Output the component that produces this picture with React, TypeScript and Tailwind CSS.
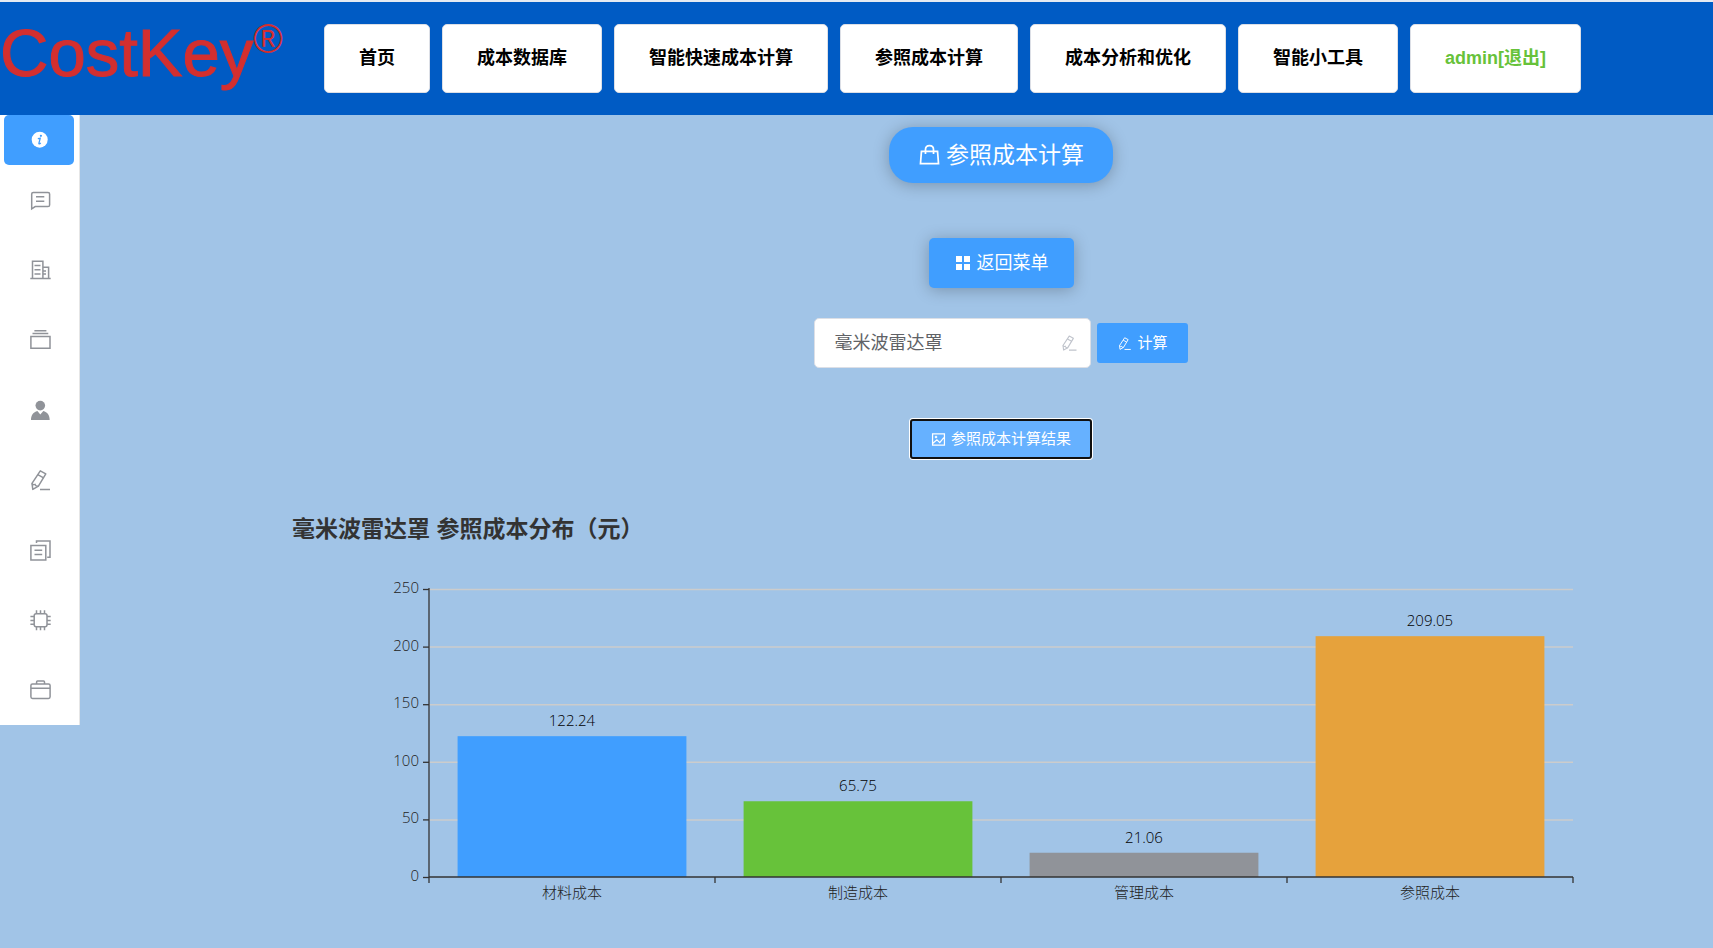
import { useState, type ReactNode } from "react";

const navItems = [
  "首页",
  "成本数据库",
  "智能快速成本计算",
  "参照成本计算",
  "成本分析和优化",
  "智能小工具",
];

const costs = [
  { name: "材料成本", value: 122.24, color: "#409eff" },
  { name: "制造成本", value: 65.75, color: "#67c23a" },
  { name: "管理成本", value: 21.06, color: "#909399" },
  { name: "参照成本", value: 209.05, color: "#e6a23c" },
];

function Icon({ children, className }: { children: ReactNode; className: string }) {
  return (
    <svg
      viewBox="0 0 24 24"
      className={`shrink-0 ${className}`}
      fill="none"
      stroke="currentColor"
      strokeWidth="1.5"
      aria-hidden="true"
    >
      {children}
    </svg>
  );
}

function EditIcon({ className }: { className: string }) {
  return (
    <Icon className={className}>
      <path d="M12.3 2.8 L17.8 5.8 L10.4 18.2 L4.8 21.4 L4 15.4 L12.3 2.8 Z" strokeLinejoin="round" />
      <path d="M9.8 6.6 L15.6 9.8 M4 15.4 Q5 17.2 7 16.4 Q7.6 18.6 10.4 18.2 M12 21.5 H22" />
    </Icon>
  );
}

const sideItems = [
  {
    label: "消息",
    icon: (
      <Icon className="size-6">
        <path d="M3.7 20.8 V6 Q3.7 4.4 5.3 4.4 H20 Q21.6 4.4 21.6 6 V16.9 Q21.6 18.5 20 18.5 H7.2 Z" />
        <path d="M8 8.8 H16.3 M8 13.2 H16.3" />
      </Icon>
    ),
  },
  {
    label: "企业",
    icon: (
      <Icon className="size-6">
        <path d="M2.3 20.6 H22.7 M4.5 20.6 V3.2 H14.9 V20.6 M14.9 9.2 H20.6 V20.6" />
        <path d="M6.5 7.5 H12.5 M6.5 11.7 H12.5 M6.5 15.9 H12.5 M15 13 H18 M15 15.9 H18" />
      </Icon>
    ),
  },
  {
    label: "文件",
    icon: (
      <Icon className="size-6">
        <path d="M2.9 8.6 H22 V20.3 H2.9 Z M4.5 5.6 H20.3 M6.4 2.7 H18.4" />
      </Icon>
    ),
  },
  {
    label: "用户",
    icon: (
      <Icon className="size-6">
        <circle cx="12.3" cy="7.6" r="4.8" fill="currentColor" stroke="none" />
        <path
          d="M3 22 C3 17 5.4 14 9.4 13 L12.3 16.6 L15.3 13 C19.3 14 21.7 17 21.7 22 Z"
          fill="currentColor"
          stroke="none"
        />
      </Icon>
    ),
  },
  { label: "编辑", icon: <EditIcon className="size-6" /> },
  {
    label: "复制",
    icon: (
      <Icon className="size-6">
        <path d="M2.9 7.4 H17.8 V21.9 H2.9 Z M8.5 4.9 V2.9 H22 V19.2 H19.2" />
        <path d="M6.5 12.3 H14.2 M6.5 16.6 H14.2" />
      </Icon>
    ),
  },
  {
    label: "芯片",
    icon: (
      <Icon className="size-6">
        <rect x="6.2" y="5.8" width="12.8" height="13" rx="2" />
        <path d="M8.5 2.3 V5.8 M12.5 2.3 V5.8 M16.5 2.3 V5.8 M8.5 18.8 V22.3 M12.5 18.8 V22.3 M16.5 18.8 V22.3" />
        <path d="M2.4 8.6 H6.2 M2.4 12.4 H6.2 M2.4 16.2 H6.2 M19 8.6 H22.7 M19 12.4 H22.7 M19 16.2 H22.7" />
      </Icon>
    ),
  },
  {
    label: "工具箱",
    icon: (
      <Icon className="size-6">
        <rect x="2.9" y="6" width="19.2" height="14.4" rx="1.6" />
        <path d="M2.9 10.2 H22.1 M8.6 6 V3.9 Q8.6 3 9.5 3 H15.6 Q16.5 3 16.5 3.9 V6" />
      </Icon>
    ),
  },
];

function BarChart() {
  const top = 10;
  const height = 288;
  const bottom = top + height;
  const y = (value: number) => bottom - (value / 250) * height;

  return (
    <svg
      className="block h-[330px] w-full overflow-visible font-['Open_Sans','Noto_Sans_CJK_SC',sans-serif] text-[15px] font-light"
      role="img"
      aria-label="参照成本分布"
    >
      {[50, 100, 150, 200, 250].map((tick) => (
        <line key={tick} x1="0" x2="100%" y1={y(tick) + 0.5} y2={y(tick) + 0.5} stroke="#ccc" strokeWidth="1.5" />
      ))}
      {costs.map((c, i) => (
        <g key={c.name}>
          <rect x={`${i * 25 + 2.5}%`} y={y(c.value)} width="20%" height={bottom - y(c.value)} fill={c.color} />
          <text x={`${i * 25 + 12.5}%`} y={y(c.value) - 10} textAnchor="middle" fill="#000">
            {c.value}
          </text>
          <text x={`${i * 25 + 12.5}%`} y={bottom + 21} textAnchor="middle" fill="#222">
            {c.name}
          </text>
        </g>
      ))}
      <line x1="0" x2="0" y1={top - 1} y2={bottom} stroke="#333" strokeWidth="1.3" />
      <line x1="0" x2="100%" y1={bottom} y2={bottom} stroke="#333" strokeWidth="1.3" />
      {[0, 25, 50, 75, 100].map((p) => (
        <line key={p} x1={`${p}%`} x2={`${p}%`} y1={bottom} y2={bottom + 6} stroke="#333" strokeWidth="1.3" />
      ))}
      {[0, 50, 100, 150, 200, 250].map((tick) => (
        <g key={tick}>
          <line x1="-6" x2="0" y1={y(tick) + 0.5} y2={y(tick) + 0.5} stroke="#333" strokeWidth="1.3" />
          <text x="-10" y={y(tick) + 4} textAnchor="end" fill="#222">
            {tick}
          </text>
        </g>
      ))}
    </svg>
  );
}

export default function App() {
  const [part, setPart] = useState("毫米波雷达罩");

  return (
    <div className="min-h-screen bg-[#a1c4e7] font-['Liberation_Sans','Noto_Sans_CJK_SC',sans-serif]">
      <header className="flex h-[115px] items-start border-t-2 border-[#e4eaf2] bg-[#005bc4]">
        <h1 className="w-[324px] shrink-0 pt-[13px] text-[67px] leading-[76px] text-[#d32f2f] [-webkit-text-stroke:1px_#d32f2f]">
          CostKey<span className="align-super text-[40px] leading-none [-webkit-text-stroke:0px]">®</span>
        </h1>
        <nav className="flex gap-3 pt-[22px] text-[18px] font-bold whitespace-nowrap">
          {navItems.map((item) => (
            <button key={item} type="button" className="h-[69px] rounded-[5px] border border-[#dcdfe6] bg-white px-[34px] text-black">
              {item}
            </button>
          ))}
          <button type="button" className="h-[69px] rounded-[5px] border border-[#dcdfe6] bg-white px-[34px] text-[#67c23a]">
            admin[退出]
          </button>
        </nav>
      </header>

      <div className="flex items-start">
        <aside className="w-[289px] shrink-0">
          <nav className="flex w-20 flex-col border-r border-[#e6e6e6] bg-white text-[#909399]">
            <button type="button" aria-label="信息" className="ml-1 flex h-[50px] w-[70px] items-center justify-center rounded-[5px] bg-[#409eff]">
              <svg viewBox="0 0 18 18" className="size-[18px]" aria-hidden="true">
                <circle cx="9.7" cy="8.7" r="8" fill="#fff" />
                <circle cx="10.9" cy="4.8" r="1.1" fill="#409eff" />
                <path d="M7.8 7.7 L10.2 7.3 L8.9 12.4 Q8.9 13.5 10.8 12" fill="none" stroke="#409eff" strokeWidth="1.3" />
              </svg>
            </button>
            {sideItems.map((item) => (
              <button key={item.label} type="button" aria-label={item.label} className="flex h-[70px] items-center pl-7">
                {item.icon}
              </button>
            ))}
          </nav>
        </aside>

        <main className="flex min-w-0 flex-1 flex-col items-center pt-3">
          <button type="button" className="flex h-14 items-center gap-[5px] rounded-[24px] bg-[#409eff] px-[29px] text-[23px] text-white shadow-[0_2px_16px_rgba(0,0,0,0.25)]">
            <Icon className="size-[23px]">
              <path d="M3.6 7.8 H20.4 L21.4 20.4 H2.6 Z M7.8 10.5 V6 Q7.8 1.8 12 1.8 Q16.2 1.8 16.2 6 V10.5" strokeWidth="1.8" />
            </Icon>
            参照成本计算
          </button>

          <button type="button" className="mt-[55px] flex h-[50px] items-center gap-[5px] rounded-[5px] bg-[#409eff] px-[25px] text-[18px] text-white shadow-[0_2px_16px_rgba(0,0,0,0.25)]">
            <svg viewBox="0 0 18 18" className="size-[18px]" fill="currentColor" aria-hidden="true">
              <path d="M2 2 H8 V8 H2 Z M10 2 H16 V8 H10 Z M2 10 H8 V16 H2 Z M10 10 H16 V16 H10 Z" />
            </svg>
            返回菜单
          </button>

          <form className="mt-[30px] flex items-center gap-[6px]" onSubmit={(e) => e.preventDefault()}>
            <label className="flex h-[50px] w-[277px] items-center rounded-[5px] border border-[#dcdfe6] bg-white pr-3 pl-[19px] text-[18px] text-[#606266]">
              <input
                type="text"
                aria-label="零件名称"
                value={part}
                onChange={(e) => setPart(e.target.value)}
                className="min-w-0 flex-1 bg-transparent outline-none"
              />
              <EditIcon className="size-[18px] text-[#c0c4cc]" />
            </label>
            <button type="submit" className="flex h-10 items-center gap-[5px] rounded-[3px] bg-[#409eff] px-5 text-[15px] text-white">
              <EditIcon className="size-[15px]" />
              计算
            </button>
          </form>

          <button type="button" className="mt-[51px] flex h-10 items-center gap-[5px] rounded-[3px] border-2 border-[#101010] bg-[#66b1ff] px-[19px] text-[15px] text-white ring-1 ring-white">
            <Icon className="size-[15px]">
              <path d="M2.5 3 H21.5 V21 H2.5 Z M3 18 L9.5 12.5 L14 17 L20.5 9" strokeWidth="2" />
              <circle cx="8" cy="8" r="1.4" fill="currentColor" />
            </Icon>
            参照成本计算结果
          </button>

          <section className="mt-[54px] w-full">
            <h2 className="pl-[3px] text-[23px] leading-8 font-bold text-[#333]">毫米波雷达罩 参照成本分布（元）</h2>
            <div className="mt-[34px] px-[140px]">
              <BarChart />
            </div>
          </section>
        </main>
      </div>
    </div>
  );
}
